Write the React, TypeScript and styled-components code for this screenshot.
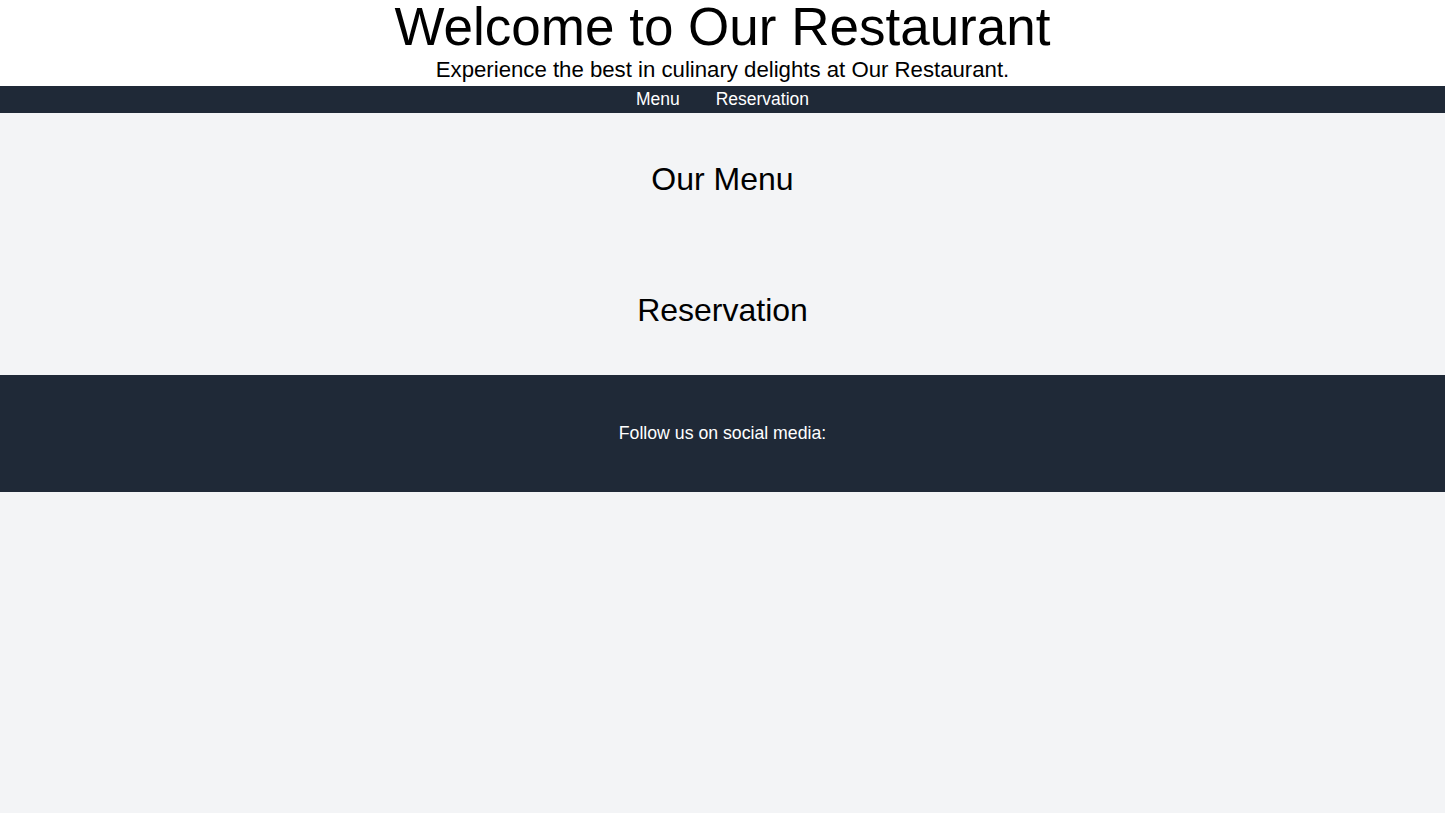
import React from 'react';
import styled, { createGlobalStyle } from 'styled-components';

const GlobalStyle = createGlobalStyle`
  html, body {
    margin: 0;
    padding: 0;
    background: #f3f4f6;
    font-family: "Liberation Sans", Arial, sans-serif;
    color: #000;
  }
  * {
    box-sizing: border-box;
  }
`;

const Header = styled.header`
  background: #ffffff;
  text-align: center;
`;

const Title = styled.h1`
  margin: 0;
  font-size: 53px;
  line-height: 53px;
  font-weight: 400;
`;

const Tagline = styled.p`
  margin: 0;
  font-size: 22.2px;
  line-height: 33px;
`;

const Nav = styled.nav`
  background: #1f2937;
  display: flex;
  justify-content: center;
  gap: 36px;
  height: 27px;
  align-items: center;
`;

const NavLink = styled.a`
  color: #ffffff;
  font-size: 17.5px;
  line-height: 27px;
  text-decoration: none;
`;

const Section = styled.section`
  padding: 48px 16px 47px;
  text-align: center;
`;

const SectionTitle = styled.h2`
  margin: 0;
  font-size: 32px;
  line-height: 36px;
  font-weight: 400;
`;

const Footer = styled.footer`
  background: #1f2937;
  color: #ffffff;
  text-align: center;
  padding: 46px 16px 47px;
`;

const FooterText = styled.p`
  margin: 0;
  font-size: 17.7px;
  line-height: 24px;
`;

const links = ['Menu', 'Reservation'];

export default function App(): JSX.Element {
  return (
    <>
      <GlobalStyle />
      <Header>
        <Title>Welcome to Our Restaurant</Title>
        <Tagline>Experience the best in culinary delights at Our Restaurant.</Tagline>
      </Header>
      <Nav>
        {links.map((l) => (
          <NavLink key={l} href={`#${l.toLowerCase()}`}>
            {l}
          </NavLink>
        ))}
      </Nav>
      <main>
        <Section id="menu">
          <SectionTitle>Our Menu</SectionTitle>
        </Section>
        <Section id="reservation">
          <SectionTitle>Reservation</SectionTitle>
        </Section>
      </main>
      <Footer>
        <FooterText>Follow us on social media:</FooterText>
      </Footer>
    </>
  );
}
